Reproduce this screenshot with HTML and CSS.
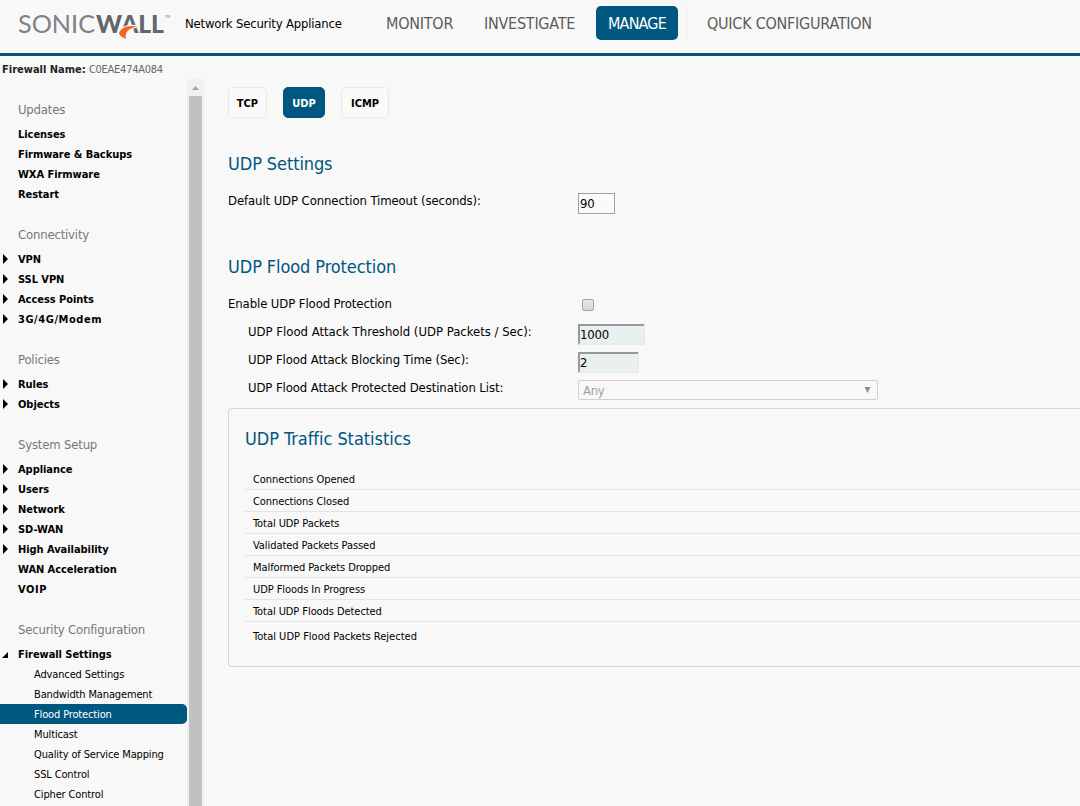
FILE: index.html
```html
<!DOCTYPE html>
<html lang="en">
<head>
    <meta charset="UTF-8">
    <meta name="viewport" content="width=device-width, initial-scale=1.0">
    <title>SonicWall - Network Security Appliance</title>
    <link rel="stylesheet" href="styles.css">
</head>
<body>
    <header class="header">
        <svg class="logo" width="154" height="36" viewBox="0 0 154 36" aria-label="SonicWall">
            <text class="logo-thin" x="0" y="27" textLength="77" lengthAdjust="spacingAndGlyphs">SONIC</text>
            <text class="logo-bold" x="78" y="27" textLength="68" lengthAdjust="spacingAndGlyphs">WALL</text>
            <text class="logo-tm" x="147" y="12" textLength="5" lengthAdjust="spacingAndGlyphs">TM</text>
            <path class="logo-edge" d="M101 27C102.500 21.500 110 18.500 120.500 20.500C112 21.500 106 25.500 108 33C104 31.500 101.500 29.500 101 27Z"/>
            <path class="logo-swoosh" d="M101 27C102.500 21.500 110 18.500 120.500 20.500C112 21.500 106 25.500 108 33C104 31.500 101.500 29.500 101 27Z"/>
        </svg>
        <span class="product">Network Security Appliance</span>
        <nav class="main-nav">
            <a class="nav-monitor">MONITOR</a>
            <a class="nav-investigate">INVESTIGATE</a>
            <a class="nav-manage active">MANAGE</a>
            <a class="nav-quick">QUICK CONFIGURATION</a>
        </nav>
    </header>

    <div class="page">
        <aside class="sidebar">
            <div class="firewall-name"><b>Firewall Name:</b> <span>C0EAE474A084</span></div>
            <div class="menu-wrap">
                <div class="menu">
                    <h3>Updates</h3>
                    <ul>
                        <li>Licenses</li>
                        <li>Firmware &amp; Backups</li>
                        <li>WXA Firmware</li>
                        <li>Restart</li>
                    </ul>
                    <h3>Connectivity</h3>
                    <ul>
                        <li class="closed">VPN</li>
                        <li class="closed">SSL VPN</li>
                        <li class="closed">Access Points</li>
                        <li class="closed wide">3G/4G/Modem</li>
                    </ul>
                    <h3>Policies</h3>
                    <ul>
                        <li class="closed">Rules</li>
                        <li class="closed">Objects</li>
                    </ul>
                    <h3>System Setup</h3>
                    <ul>
                        <li class="closed">Appliance</li>
                        <li class="closed">Users</li>
                        <li class="closed">Network</li>
                        <li class="closed">SD-WAN</li>
                        <li class="closed">High Availability</li>
                        <li>WAN Acceleration</li>
                        <li class="wide">VOIP</li>
                    </ul>
                    <h3>Security Configuration</h3>
                    <ul>
                        <li class="open">Firewall Settings</li>
                    </ul>
                    <ul class="submenu">
                        <li>Advanced Settings</li>
                        <li>Bandwidth Management</li>
                        <li class="selected">Flood Protection</li>
                        <li>Multicast</li>
                        <li>Quality of Service Mapping</li>
                        <li>SSL Control</li>
                        <li>Cipher Control</li>
                    </ul>
                </div>
                <div class="scrollbar">
                    <svg class="scroll-up" width="17" height="17" viewBox="0 0 17 17"><path d="M5 11L8.500 7L12 11Z"/></svg>
                    <div class="scroll-thumb"></div>
                </div>
            </div>
        </aside>

        <main class="content">
            <div class="tabs">
                <button class="tab tab-tcp">TCP</button>
                <button class="tab tab-udp active">UDP</button>
                <button class="tab tab-icmp">ICMP</button>
            </div>

            <h2>UDP Settings</h2>
            <div class="row">
                <label for="timeout">Default UDP Connection Timeout (seconds):</label>
                <input type="text" id="timeout" class="timeout" value="90">
            </div>

            <h2 class="second">UDP Flood Protection</h2>
            <div class="row">
                <label for="enable">Enable UDP Flood Protection</label>
                <input type="checkbox" id="enable" class="check">
            </div>
            <div class="row sub">
                <label for="threshold" class="long">UDP Flood Attack Threshold (UDP Packets / Sec):</label>
                <input type="text" id="threshold" class="inset threshold" value="1000">
            </div>
            <div class="row sub">
                <label for="blocking">UDP Flood Attack Blocking Time (Sec):</label>
                <input type="text" id="blocking" class="inset blocking" value="2">
            </div>
            <div class="row sub">
                <label>UDP Flood Attack Protected Destination List:</label>
                <div class="select"><span>Any</span><svg width="7" height="7" viewBox="0 0 7 7"><path d="M0.500 0H6.500L3.500 6Z"/></svg></div>
            </div>

            <section class="stats">
                <h2>UDP Traffic Statistics</h2>
                <ul>
                    <li>Connections Opened</li>
                    <li>Connections Closed</li>
                    <li>Total UDP Packets</li>
                    <li>Validated Packets Passed</li>
                    <li>Malformed Packets Dropped</li>
                    <li>UDP Floods In Progress</li>
                    <li>Total UDP Floods Detected</li>
                    <li>Total UDP Flood Packets Rejected</li>
                </ul>
            </section>
        </main>
    </div>
</body>
</html>
```
FILE: styles.css
```css
* {
    box-sizing: border-box;
}
body {
    margin: 0;
    height: 806px;
    overflow: hidden;
    background: #f8f8f8;
    color: #000;
    font-family: Tahoma, "DejaVu Sans Condensed", "DejaVu Sans", sans-serif;
    font-stretch: condensed;
    font-size: 11px;
}
ul {
    list-style: none;
    margin: 0;
    padding: 0;
}
.header {
    display: flex;
    height: 56px;
    border-bottom: 3px solid #0a507a;
}
.logo {
    margin: 6px 13px 0 18px;
    overflow: visible;
}
.logo text {
    font-family: Lato, sans-serif;
    font-stretch: normal;
    fill: #63666a;
}
.logo .logo-thin {
    font-size: 25px;
    font-weight: 400;
    fill: #808285;
}
.logo .logo-bold {
    font-size: 25px;
    font-weight: 900;
}
.logo .logo-tm {
    font-size: 4px;
}
.logo-swoosh {
    fill: #f26522;
}
.logo-edge {
    fill: none;
    stroke: #f8f8f8;
    stroke-width: 2;
}
.product {
    width: 178px;
    line-height: 47px;
    font-size: 13px;
    letter-spacing: -0.2px;
    white-space: nowrap;
}
.main-nav {
    display: flex;
    margin-top: 6px;
    font-size: 16px;
    letter-spacing: -0.25px;
    line-height: 35px;
    color: #5c5c5c;
    white-space: nowrap;
}
.main-nav a {
    height: 34px;
}
.nav-monitor {
    width: 98px;
    margin-left: 23px;
}
.nav-investigate {
    width: 112px;
}
.nav-manage {
    width: 82px;
    text-align: center;
    letter-spacing: -0.8px;
    border-radius: 5px;
}
.main-nav .active {
    background: #005780;
    color: #fff;
}
.nav-quick {
    margin-left: 8px;
    padding-left: 20px;
    border-left: 1px solid #eaeaea;
}
.page {
    display: flex;
    height: 750px;
}
.sidebar {
    width: 204px;
    display: flex;
    flex-direction: column;
    flex: none;
}
.firewall-name {
    padding: 3px 0 0 2px;
    height: 23px;
    line-height: 22px;
    color: #666;
}
.firewall-name b {
    color: #222;
}
.firewall-name span {
    letter-spacing: -0.25px;
}
.menu-wrap {
    display: flex;
    flex: 1;
    overflow: hidden;
}
.menu {
    width: 187px;
}
.menu h3 {
    height: 20px;
    margin: 20px 0 5px 18px;
    font-size: 13px;
    font-weight: normal;
    letter-spacing: -0.19px;
    line-height: 22px;
    color: #777;
}
.menu li {
    height: 20px;
    line-height: 20px;
    padding: 1px 0 0 18px;
    font-weight: bold;
    letter-spacing: -0.05px;
    white-space: nowrap;
    display: flex;
    align-items: center;
}
.menu .closed {
    padding-left: 3px;
}
.menu .wide {
    letter-spacing: 0.55px;
}
.closed::before {
    content: "";
    width: 5px;
    height: 10px;
    margin: -1px 10px 0 0;
    background: #000;
    clip-path: polygon(0 0, 100% 50%, 0 100%);
}
.menu .open {
    padding-left: 2px;
}
.open::before {
    content: "";
    width: 6px;
    height: 6px;
    margin: 1px 10px 0 0;
    background: #000;
    clip-path: polygon(100% 0, 100% 100%, 0 100%);
}
.menu .submenu li {
    padding-left: 34px;
    font-weight: normal;
    letter-spacing: -0.14px;
}
.menu .submenu .selected {
    background: #005780;
    color: #fff;
    border-radius: 0 5px 5px 0;
}
.scrollbar {
    width: 17px;
    background: #f1f1f1;
}
.scroll-up {
    display: block;
    fill: #a3a3a3;
}
.scroll-thumb {
    height: 710px;
    margin: 0 2px;
    background: #c1c1c1;
}
.content {
    flex: 1;
    padding: 31px 0 0 24px;
    overflow: hidden;
}
.tabs {
    display: flex;
    gap: 16px;
}
.tab {
    height: 31px;
    padding: 1px 0 0;
    border: 1px solid #e8e8e8;
    border-radius: 5px;
    background: #fafafa;
    color: #000;
    font: inherit;
    font-weight: bold;
}
.tab-tcp {
    width: 39px;
}
.tab-udp {
    width: 42px;
}
.tab-icmp {
    width: 48px;
}
.tab.active {
    background: #005780;
    border-color: #005780;
    color: #fff;
}
h2 {
    height: 23px;
    margin: 34px 0 15px;
    font-size: 18px;
    font-weight: normal;
    letter-spacing: -0.1px;
    line-height: 23px;
    color: #005780;
}
h2.second {
    margin: 37px 0 15px;
}
.row {
    display: flex;
    align-items: flex-start;
    height: 28px;
    font-size: 13px;
}
.row label {
    width: 350px;
    letter-spacing: -0.1px;
    line-height: 21px;
    white-space: nowrap;
}
.row.sub label {
    padding-left: 20px;
}
.row .long {
    letter-spacing: -0.01px;
}
.row input {
    margin: 3px 0 0;
    height: 21px;
    padding: 0 1px;
    border: 1px solid #a0a0a0;
    background: #fafafa;
    color: #000;
    font: inherit;
    letter-spacing: -0.2px;
}
.row .timeout {
    width: 37px;
}
.row .check {
    appearance: none;
    width: 12px;
    height: 12px;
    margin: 6px 0 0 4px;
    border: 1px solid #a5a5a5;
    border-radius: 2px;
    background: linear-gradient(#e8e8e8, #d6d6d6);
}
.row .inset {
    border: 2px solid;
    border-color: #999 #e6ebeb #e6ebeb #999;
    background: #e8f0f0;
    padding: 0;
}
.row .threshold {
    width: 67px;
}
.row .blocking {
    width: 61px;
}
.select {
    display: flex;
    align-items: center;
    justify-content: space-between;
    width: 300px;
    height: 20px;
    margin-top: 3px;
    padding: 0 6px 0 4px;
    border: 1px solid #d0d0d0;
    border-radius: 2px;
    color: #a0a0a0;
    font-size: 13px;
    letter-spacing: -0.3px;
}
.select svg {
    fill: #8c8c8c;
}
.stats {
    height: 259px;
    margin-top: 3px;
    padding-left: 16px;
    border: 1px solid #d6d6d6;
    border-right: none;
    border-radius: 4px 0 0 4px;
}
.stats h2 {
    margin: 18px 0;
    letter-spacing: -0.05px;
}
.stats li {
    height: 22px;
    padding-left: 8px;
    letter-spacing: -0.07px;
    line-height: 23px;
    border-bottom: 1px solid #e4e4e4;
}
.stats li:last-child {
    border: none;
    line-height: 29px;
    letter-spacing: 0.01px;
}
```
